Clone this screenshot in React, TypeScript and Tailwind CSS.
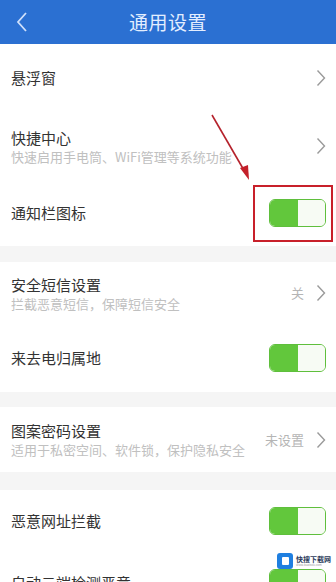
import React from "react";

const font = { fontFamily: '"Noto Sans CJK SC", "Noto Sans", sans-serif' };

function Chevron() {
  return (
    <svg width="10" height="18" viewBox="0 0 10 18" className="shrink-0">
      <path d="M1.5 1.5 L8.5 9 L1.5 16.5" fill="none" stroke="#9a9a9a" strokeWidth="1.4" />
    </svg>
  );
}

function Toggle() {
  return (
    <div className="flex w-[57px] h-[28px] rounded-[6px] border-[1.5px] border-[#5fbf3c] overflow-hidden shrink-0">
      <div className="w-[28px] h-full bg-[#62c73c]" />
      <div className="flex-1 h-full bg-[#f7fbf4]" />
    </div>
  );
}

function Row({
  h,
  title,
  sub,
  right,
}: {
  h: string;
  title: string;
  sub?: string;
  right: React.ReactNode;
}) {
  return (
    <div className={`flex items-center justify-between bg-white pl-[11px] pr-[10px] ${h}`}>
      <div className="flex flex-col">
        <div className="text-[15px] leading-[20px] text-[#333]">{title}</div>
        {sub && <div className="text-[13px] leading-[17px] text-[#c0c0c0]">{sub}</div>}
      </div>
      {right}
    </div>
  );
}

function Sep({ h }: { h: string }) {
  return <div className={`bg-[#f5f5f5] ${h}`} />;
}

export default function App() {
  return (
    <div className="relative w-[336px] h-[582px] overflow-hidden bg-white" style={font}>
      <div className="relative flex items-center justify-center h-[44px] bg-[#2b70d2]">
        <svg width="14" height="22" viewBox="0 0 14 22" className="absolute left-[15px] top-[11px]">
          <path d="M11 2 L3 11 L11 20" fill="none" stroke="#cfe0fb" strokeWidth="1.8" />
        </svg>
        <div className="text-[19px] text-[#e3eeff] tracking-[0.5px]">通用设置</div>
      </div>

      <Row h="h-[68px]" title="悬浮窗" right={<Chevron />} />
      <Row h="h-[68px]" title="快捷中心" sub="快速启用手电筒、WiFi管理等系统功能" right={<Chevron />} />
      <Row h="h-[66px]" title="通知栏图标" right={<Toggle />} />
      <Sep h="h-[16px]" />
      <Row
        h="h-[62px]"
        title="安全短信设置"
        sub="拦截恶意短信，保障短信安全"
        right={
          <div className="flex items-center gap-[12px]">
            <span className="text-[13px] text-[#b5b5b5]">关</span>
            <Chevron />
          </div>
        }
      />
      <Row h="h-[68px]" title="来去电归属地" right={<Toggle />} />
      <Sep h="h-[15px]" />
      <Row
        h="h-[65px]"
        title="图案密码设置"
        sub="适用于私密空间、软件锁，保护隐私安全"
        right={
          <div className="flex items-center gap-[12px]">
            <span className="text-[13px] text-[#b5b5b5]">未设置</span>
            <Chevron />
          </div>
        }
      />
      <Sep h="h-[18px]" />
      <Row h="h-[62px]" title="恶意网址拦截" right={<Toggle />} />
      <Row h="h-[62px]" title="自动云端检测恶意" right={<Toggle />} />

      {/* red highlight box */}
      <div className="absolute left-[253px] top-[185px] w-[80px] h-[57px] border-2 border-[#c8202a]" />
      {/* red arrow */}
      <svg className="absolute left-0 top-0" width="336" height="582">
        <line x1="212" y1="115" x2="245" y2="172" stroke="#b5222c" strokeWidth="1.6" />
        <polygon points="249,180 240,168 248,165" fill="#c4202a" />
      </svg>

      {/* watermark */}
      <div className="absolute left-[277px] top-[553px] flex items-center gap-[3px]">
        <div className="w-[16px] h-[16px] rounded-[3px] bg-[#1f7fe0] flex items-center justify-center">
          <div className="w-[7px] h-[8px] bg-white rounded-[1px]" />
        </div>
        <div className="flex flex-col leading-none">
          <span className="text-[7px] font-bold text-[#2a3a5a]">快搜下载网</span>
          <span className="text-[3px] text-[#999] mt-[1px]">www.kuaisou.com</span>
        </div>
      </div>
    </div>
  );
}
